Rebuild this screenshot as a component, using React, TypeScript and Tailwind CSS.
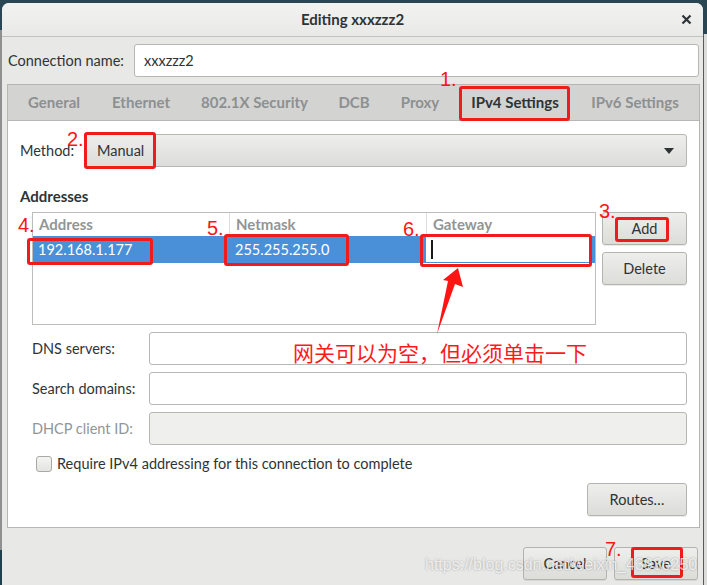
import React from "react"

const tabs = [
  { name: "General", w: "w-[84px]" },
  { name: "Ethernet", w: "w-[90px]" },
  { name: "802.1X Security", w: "w-[137px]" },
  { name: "DCB", w: "w-[62px]" },
  { name: "Proxy", w: "w-[70px]" },
  { name: "IPv4 Settings", w: "w-[120px]", active: true },
  { name: "IPv6 Settings", w: "w-[120px]" },
]

const Btn = ({ label, className = "" }: { label: string; className?: string }) => (
  <div
    className={
      "flex items-center justify-center rounded-[3px] border border-[#b3b3b0] bg-gradient-to-b from-[#eeeeec] to-[#dcdcd9] text-[14.5px] text-[#2e3436] shadow-[0_1px_0_rgba(0,0,0,0.08)] " +
      className
    }
  >
    {label}
  </div>
)

const Field = ({ label, disabled }: { label: string; disabled?: boolean }) => (
  <div className="flex h-[33px] items-center">
    <div className={"w-[117px] text-[14.5px] " + (disabled ? "text-[#929595]" : "text-[#2e3436]")}>{label}</div>
    <div
      className={
        "h-full flex-1 rounded-[3px] border border-[#b6b6b3] " + (disabled ? "bg-[#efefee]" : "bg-white")
      }
    />
  </div>
)

const Num = ({ n, className }: { n: string; className: string }) => (
  <div className={"absolute text-[20px] leading-[20px] text-[#ff1414] font-['Liberation_Sans',Arial,sans-serif] " + className}>
    {n}
  </div>
)

const Box = ({ className }: { className: string }) => (
  <div className={"absolute rounded-[3px] border-[3px] border-[#f01c1c] " + className} />
)

export default function App() {
  return (
    <div className="relative flex h-[585px] w-[707px] overflow-hidden bg-[#2a4652] font-['Lato','Noto_Sans',sans-serif]">
      {/* desktop strips */}
      <div className="flex w-[2px] flex-col">
        <div className="h-[30px] bg-[#2a4652]" />
        <div className="h-[520px] bg-[#8e9190]" />
        <div className="flex-1 bg-[#22404b]" />
      </div>

      {/* window */}
      <div className="mt-[3px] flex w-[701px] flex-col rounded-t-[7px] bg-[#e8e8e7]">
        <div className="flex h-[34px] items-center rounded-t-[7px] border-b border-[#c2c2bf] bg-gradient-to-b from-[#f2f2f1] to-[#e9e9e8]">
          <div className="w-[34px]" />
          <div className="flex-1 text-center text-[15px] font-bold text-[#2e3436]">Editing xxxzzz2</div>
          <div className="flex w-[34px] items-center justify-center">
            <svg width="11" height="11" viewBox="0 0 11 11">
              <path d="M1.5 1.5 L9.5 9.5 M9.5 1.5 L1.5 9.5" stroke="#2e3436" strokeWidth="2.2" />
            </svg>
          </div>
        </div>

        <div className="mt-[7px] flex h-[33px] items-center">
          <div className="w-[132px] pl-[6px] text-[14.5px] text-[#2e3436]">Connection name:</div>
          <div className="flex h-full w-[565px] items-center rounded-[3px] border border-[#b6b6b3] bg-white pl-[9px] text-[14.5px] text-[#2e3436]">
            xxxzzz2
          </div>
        </div>

        {/* notebook */}
        <div className="ml-[5px] mt-[7px] flex h-[444px] w-[693px] flex-col border border-[#b6b6b3]">
          <div className="flex h-[36px] border-b border-[#b6b6b3] bg-[#d3d3d2] pl-[4px]">
            {tabs.map((t) => (
              <div
                key={t.name}
                className={
                  "flex h-full items-center justify-center text-[15px] font-bold " +
                  t.w +
                  (t.active ? " text-[#2e3436]" : " text-[#8d9091]")
                }
              >
                {t.name}
              </div>
            ))}
          </div>

          <div className="flex flex-1 flex-col bg-white px-[12px] pt-[13px]">
            <div className="flex h-[33px] items-center">
              <div className="w-[65px] text-[14.5px] text-[#2e3436]">Method:</div>
              <div className="flex h-full flex-1 items-center justify-between rounded-[3px] border border-[#b6b6b3] bg-gradient-to-b from-[#eeeeec] to-[#dcdcd9] pl-[11px] pr-[12px] text-[14.5px] text-[#2e3436]">
                <span>Manual</span>
                <svg width="10" height="6" viewBox="0 0 10 6">
                  <path d="M0 0 H10 L5 6 Z" fill="#2e3436" />
                </svg>
              </div>
            </div>

            <div className="mt-[19px] text-[15px] font-bold leading-[20px] text-[#2e3436]">Addresses</div>

            <div className="mt-[6px] flex gap-[6px] pl-[12px]">
              <div className="flex h-[113px] w-[564px] flex-col border border-[#bdbdba] bg-white">
                <div className="flex h-[23px] text-[15px] font-bold text-[#929595]">
                  <div className="flex w-[196px] items-center pl-[6px]">Address</div>
                  <div className="flex w-[197px] items-center border-l border-[#dedede] pl-[6px]">Netmask</div>
                  <div className="flex flex-1 items-center border-l border-[#dedede] pl-[6px]">Gateway</div>
                </div>
                <div className="flex h-[27px] bg-[#4a90d9] text-[14.5px] text-white">
                  <div className="flex w-[196px] items-center pl-[5px]">192.168.1.177</div>
                  <div className="flex w-[197px] items-center pl-[6px]">255.255.255.0</div>
                  <div className="flex flex-1 items-center py-[1px] pr-[6px]">
                    <div className="flex h-full flex-1 items-center bg-white pl-[5px]">
                      <div className="h-[19px] w-[1.5px] bg-[#1a1a1a]" />
                    </div>
                  </div>
                </div>
              </div>
              <div className="flex w-[85px] flex-col gap-[7px]">
                <Btn label="Add" className="h-[33px]" />
                <Btn label="Delete" className="h-[33px]" />
              </div>
            </div>

            <div className="mt-[7px] flex flex-col gap-[7px] pl-[12px]">
              <Field label="DNS servers:" />
              <Field label="Search domains:" />
              <Field label="DHCP client ID:" disabled />
            </div>

            <div className="mt-[11px] flex h-[16px] items-center pl-[16px]">
              <div className="h-[16px] w-[16px] rounded-[3px] border border-[#a9a9a6] bg-gradient-to-b from-[#f4f4f3] to-[#e3e3e1]" />
              <div className="ml-[5px] text-[14.5px] text-[#2e3436]">Require IPv4 addressing for this connection to complete</div>
            </div>

            <div className="mt-[11px] flex justify-end">
              <Btn label="Routes…" className="h-[33px] w-[100px]" />
            </div>
          </div>
        </div>

        <div className="mt-[19px] flex justify-end gap-[7px] pr-[5px]">
          <Btn label="Cancel" className="h-[33px] w-[84px]" />
          <Btn label="Save" className="h-[33px] w-[84px]" />
        </div>
      </div>

      {/* desktop strip right */}
      <div className="flex w-[4px] flex-col">
        <div className="h-[34px] bg-[#2a4652]" />
        <div className="flex-1 border-l border-[#5a5a5a] bg-[#dcdcdb]" />
      </div>

      {/* annotations */}
      <Box className="left-[459px] top-[86px] h-[35px] w-[111px]" />
      <Num n="1." className="left-[440px] top-[69px]" />
      <Box className="left-[84px] top-[132px] h-[37px] w-[72px]" />
      <Num n="2." className="left-[67px] top-[129px]" />
      <Box className="left-[615px] top-[217px] h-[25px] w-[54px]" />
      <Num n="3." className="left-[599px] top-[201px]" />
      <Box className="left-[27px] top-[238px] h-[27px] w-[126px]" />
      <Num n="4." className="left-[18px] top-[215px]" />
      <Box className="left-[224px] top-[234px] h-[32px] w-[125px]" />
      <Num n="5." className="left-[207px] top-[218px]" />
      <Box className="left-[420px] top-[234px] h-[33px] w-[172px]" />
      <Num n="6." className="left-[403px] top-[219px]" />
      <Box className="left-[631px] top-[547px] h-[31px] w-[52px]" />
      <Num n="7." className="left-[605px] top-[539px]" />

      <svg className="absolute left-0 top-0" width="707" height="585" viewBox="0 0 707 585">
        <polygon points="458,268 463,287 455,284 437,334 448,281 443,280" fill="#ff1414" />
      </svg>

      <div className="absolute left-[293px] top-[340px] text-[21px] leading-[24px] text-[#ff1a1a] font-['Noto_Sans_CJK_SC',sans-serif]">
        网关可以为空，但必须单击一下
      </div>

      <div className="absolute left-[425px] top-[555px] text-[16px] leading-[20px] text-[rgba(255,255,255,0.78)] font-['Liberation_Sans',Arial,sans-serif] [text-shadow:0_0_2px_rgba(0,0,0,0.35)]">
        https://blog.csdn.net/weixin_43936250
      </div>
    </div>
  )
}
